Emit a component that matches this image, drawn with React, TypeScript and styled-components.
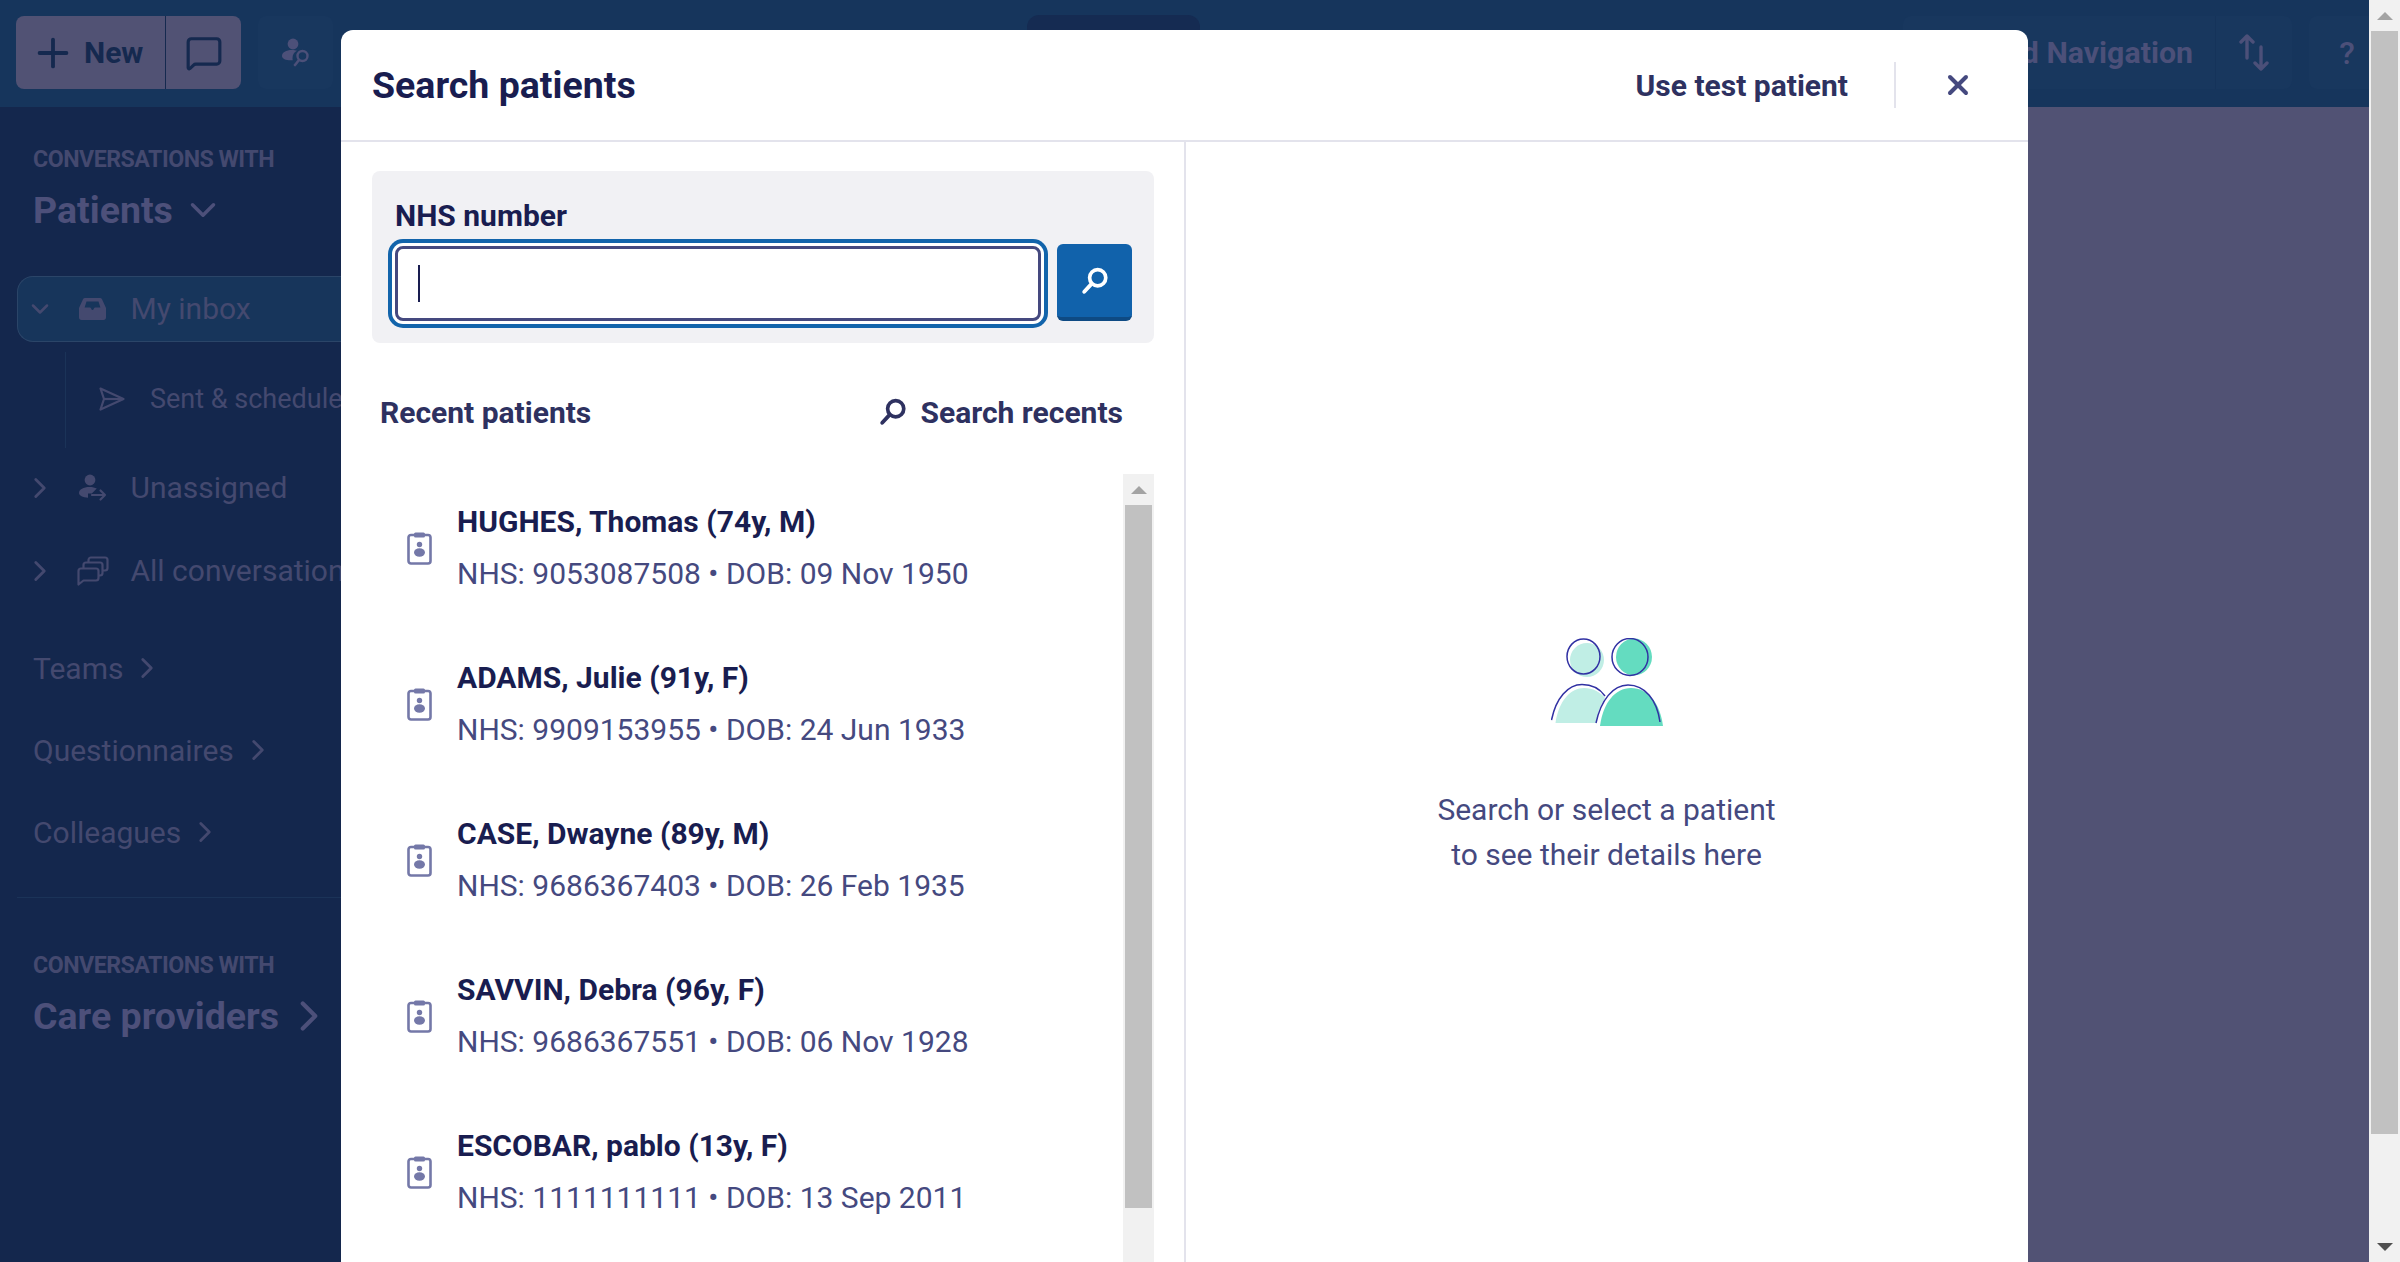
import React from "react";
import styled, { createGlobalStyle } from "styled-components";
import { ChevronDown, ChevronRight, MessageSquare, Plus, X } from "lucide-react";

const GlobalStyle = createGlobalStyle`
  html, body, #root {
    margin: 0;
    height: 100%;
  }
  body {
    overflow: hidden;
    font-family: Roboto, "Liberation Sans", sans-serif;
    background: #515274;
  }
  * {
    box-sizing: border-box;
  }
`;

const Viewport = styled.div`
  display: flex;
  height: 1262px;
  overflow: hidden;
`;

const Shell = styled.div`
  position: relative;
  flex: 1;
  display: flex;
  flex-direction: column;
  min-width: 0;
`;

const TopBar = styled.header`
  display: flex;
  flex-shrink: 0;
  height: 107px;
  padding: 16px 0 18px 16px;
  background: #16355c;
  overflow: hidden;
`;

const SplitButton = styled.div`
  display: flex;
  align-items: center;
  width: 225px;
  border-radius: 8px;
  background: #515274;
  color: #15294f;
`;

const NewPart = styled.div`
  display: flex;
  align-items: center;
  gap: 8px;
  width: 150px;
  height: 100%;
  padding-left: 14px;
  border-right: 1px solid #15294f;
  font-size: 30px;
  font-weight: 700;
`;

const CommentPart = styled.div`
  flex: 1;
  display: flex;
  justify-content: center;
`;

const GhostButton = styled.div<{ $width: number }>`
  display: flex;
  flex-shrink: 0;
  align-items: center;
  justify-content: center;
  width: ${(p) => p.$width}px;
  border-radius: 8px;
  background: #18375e;
  color: #4c5079;
`;

const FindButton = styled(GhostButton)`
  margin-left: 17px;
`;

const CentreTab = styled.div`
  flex-shrink: 0;
  width: 173px;
  margin-left: 694px;
  margin-top: -1px;
  border-radius: 12px 12px 0 0;
  background: #152b52;
`;

const RightTools = styled.div`
  display: flex;
  flex-shrink: 0;
  gap: 17px;
  margin-left: auto;
  margin-right: -16px;
`;

const NavButton = styled.div`
  display: flex;
  align-items: stretch;
  border-radius: 8px;
  background: #18375e;
  color: #4c5079;
  font-size: 30.3px;
  font-weight: 700;
`;

const NavLabel = styled.div`
  display: flex;
  align-items: center;
  padding: 0 22px 0 40px;
  border-right: 1px solid #15335a;
  white-space: nowrap;
`;

const NavArrows = styled.div`
  display: flex;
  align-items: center;
  justify-content: center;
  width: 76px;
`;

const HelpMark = styled.span`
  font-size: 32px;
  font-weight: 500;
`;

const Content = styled.div`
  flex: 1;
  display: flex;
  min-height: 0;
`;

const Sidebar = styled.aside`
  display: flex;
  flex-direction: column;
  flex-shrink: 0;
  width: 341px;
  background: #14274d;
  color: #44496f;
  overflow: hidden;
`;

const SectionHead = styled.div`
  padding: 0 0 0 33px;
`;

const Eyebrow = styled.div`
  height: 25px;
  font-size: 23.2px;
  font-weight: 700;
  line-height: 25px;
  letter-spacing: -0.5px;
  text-transform: uppercase;
  white-space: nowrap;
`;

const SectionTitle = styled.div`
  display: flex;
  align-items: center;
  gap: 9px;
  height: 46px;
  margin-top: 15px;
  font-size: 37.5px;
  font-weight: 700;
  color: #4d507a;
  white-space: nowrap;
`;

const CareTitle = styled(SectionTitle)`
  gap: 5px;
`;

const PatientsHead = styled(SectionHead)`
  padding-top: 40px;
`;

const CareHead = styled(SectionHead)`
  padding-top: 55px;
`;

const NavList = styled.div`
  display: flex;
  flex-direction: column;
  margin-top: 43px;
`;

const InboxRow = styled.div`
  display: flex;
  align-items: center;
  height: 66px;
  margin-left: 17px;
  padding-left: 5px;
  border: 1px solid #2b4568;
  border-right: none;
  border-radius: 16px 0 0 16px;
  background: #17355b;
  white-space: nowrap;
`;

const ChildList = styled.div`
  height: 96px;
  margin: 10px 0 10px 65px;
  padding: 23px 0 0 33px;
  border-left: 1px solid #1b3358;
`;

const ChildRow = styled.div`
  display: flex;
  align-items: center;
  gap: 25px;
  height: 48px;
  font-size: 27px;
  white-space: nowrap;

  svg {
    flex-shrink: 0;
  }
`;

const TreeRow = styled.div`
  display: flex;
  align-items: center;
  height: 60px;
  padding-left: 23px;
  white-space: nowrap;

  & + & {
    margin-top: 23px;
  }
`;

const ChevronSlot = styled.span`
  display: flex;
  flex-shrink: 0;
  align-items: center;
  justify-content: center;
  width: 34px;
`;

const IconSlot = styled.span`
  display: flex;
  flex-shrink: 0;
  align-items: center;
  justify-content: center;
  width: 48px;
  margin-left: 11.5px;
  margin-right: 14px;
`;

const RowLabel = styled.span`
  font-size: 30px;
  line-height: 36px;
`;

const PlainLinks = styled.div`
  display: flex;
  flex-direction: column;
  gap: 22px;
  margin-top: 37px;
  padding-left: 33px;
`;

const PlainLink = styled.div`
  display: flex;
  align-items: center;
  gap: 7px;
  height: 60px;
  font-size: 30px;
`;

const SideRule = styled.div`
  height: 1px;
  margin: 35px 0 0 17px;
  background: #1b3358;
`;

const Stage = styled.main`
  flex: 1;
  background: #515274;
`;

const Modal = styled.section`
  position: absolute;
  top: 30px;
  bottom: 0;
  left: 341px;
  width: 1687px;
  display: flex;
  flex-direction: column;
  border-radius: 12px 12px 0 0;
  background: #fff;
  overflow: hidden;
`;

const ModalHeader = styled.div`
  display: flex;
  flex-shrink: 0;
  align-items: center;
  height: 112px;
  padding: 0 54px 0 31px;
  border-bottom: 2px solid #e3e3ec;
`;

const ModalTitle = styled.h2`
  flex: 1;
  margin: 0;
  font-size: 37.5px;
  font-weight: 700;
  color: #191d50;
`;

const TestPatient = styled.button`
  padding: 0;
  border: none;
  background: none;
  font-family: inherit;
  font-size: 30px;
  font-weight: 700;
  color: #2e3160;
`;

const HeaderRule = styled.span`
  width: 2px;
  height: 46px;
  margin: 0 46px 0 46px;
  background: #e3e3ec;
`;

const CloseButton = styled.span`
  display: flex;
  color: #45497f;
`;

const ModalBody = styled.div`
  flex: 1;
  display: flex;
  min-height: 0;
`;

const LeftPane = styled.div`
  display: flex;
  flex-direction: column;
  flex-shrink: 0;
  width: 845px;
  padding: 29px 30px 0 31px;
  border-right: 2px solid #e3e3ec;
`;

const SearchPanel = styled.div`
  height: 172px;
  padding: 26px 22px 0 23px;
  border-radius: 8px;
  background: #f1f1f4;
`;

const FieldLabel = styled.label`
  display: block;
  height: 38px;
  font-size: 30px;
  font-weight: 700;
  line-height: 38px;
  color: #191d50;
`;

const FieldRow = styled.div`
  display: flex;
  align-items: flex-start;
  gap: 16px;
  margin-top: 9px;
`;

const FieldFrame = styled.div`
  flex: 1;
  height: 75px;
  margin-top: 2px;
  display: flex;
  align-items: center;
  padding-left: 20px;
  border: 3px solid #45497f;
  border-radius: 8px;
  background: #fff;
  box-shadow: 0 0 0 3px #fff, 0 0 0 7px #1264ab;
`;

const Caret = styled.span`
  width: 2px;
  height: 37px;
  background: #191d50;
`;

const SearchButton = styled.button`
  display: flex;
  flex-shrink: 0;
  align-items: center;
  justify-content: center;
  width: 75px;
  height: 77px;
  padding: 0;
  border: none;
  border-bottom: 4px solid #0e4a83;
  border-radius: 6px;
  background: #1162ab;
`;

const RecentHead = styled.div`
  display: flex;
  align-items: center;
  justify-content: space-between;
  height: 50px;
  margin-top: 44px;
  padding: 0 31px 0 8px;
  font-size: 30px;
  font-weight: 700;
  color: #2e3160;
`;

const RecentSearch = styled.span`
  display: flex;
  align-items: center;
  gap: 14px;
`;

const ListFrame = styled.div`
  flex: 1;
  display: flex;
  justify-content: space-between;
  min-height: 0;
  margin-top: 37px;
`;

const PatientList = styled.ul`
  flex: 1;
  margin: 0;
  padding: 0;
  list-style: none;
  overflow: hidden;
`;

const PatientRow = styled.li`
  display: flex;
  align-items: center;
  height: 156px;
  padding: 0 0 8px 35px;
  gap: 25px;

  svg {
    flex-shrink: 0;
  }
`;

const PatientName = styled.div`
  font-size: 30px;
  font-weight: 700;
  line-height: 40px;
  color: #191d50;
`;

const PatientMeta = styled.div`
  margin-top: 12.5px;
  font-size: 30px;
  line-height: 40px;
  color: #45497f;
`;

const Track = styled.div<{ $gutter: number }>`
  display: flex;
  flex-direction: column;
  flex-shrink: 0;
  width: 31px;
  padding: 0 ${(p) => p.$gutter}px;
  background: #f1f1f1;
`;

const ArrowCap = styled.div`
  display: flex;
  flex-shrink: 0;
  align-items: center;
  justify-content: center;
  height: 31px;
`;

const Thumb = styled.div<{ $height: number }>`
  flex-shrink: 0;
  height: ${(p) => p.$height}px;
  background: #c1c1c1;
`;

const PageTrack = styled(Track)`
  justify-content: space-between;
`;

const RightPane = styled.div`
  flex: 1;
  display: flex;
  flex-direction: column;
  align-items: center;
  padding: 496px 1px 0 0;
`;

const EmptyText = styled.p`
  margin: 61px 0 0;
  font-size: 30px;
  line-height: 45px;
  text-align: center;
  color: #45497f;
`;

const UpArrow = ({ color }: { color: string }) => (
  <svg width="16" height="8" viewBox="0 0 16 8">
    <path d="M8 0L16 8H0Z" fill={color} />
  </svg>
);

const DownArrow = ({ color }: { color: string }) => (
  <svg width="16" height="8" viewBox="0 0 16 8">
    <path d="M0 0H16L8 8Z" fill={color} />
  </svg>
);

const Magnifier = ({ size, color }: { size: number; color: string }) => (
  <svg width={size} height={size} viewBox="0 0 26 26" fill="none">
    <circle cx="15.5" cy="10" r="7.5" stroke={color} strokeWidth="3.4" />
    <path d="M10 15.5L3 23" stroke={color} strokeWidth="3.6" strokeLinecap="round" />
  </svg>
);

const PersonSearchIcon = () => (
  <svg width="28" height="30" viewBox="0 0 28 30">
    <circle cx="11" cy="6" r="5.4" fill="currentColor" />
    <path d="M0 18c0-3.500 4-6 10-6 2 0 3.500.3 5 .8-3 1.500-4.500 4-4.500 7.200 0 .8.100 1.500.3 2.200C5 22.800 0 21 0 18Z" fill="currentColor" />
    <circle cx="20.500" cy="18" r="5" fill="none" stroke="currentColor" strokeWidth="2.400" />
    <path d="M17 22l-4 5" stroke="currentColor" strokeWidth="2.600" strokeLinecap="round" />
  </svg>
);

const InboxIcon = () => (
  <svg width="27" height="22" viewBox="0 0 27 22">
    <path
      d="M6 0h15c.9 0 1.600.4 2 1.200L27 10v9.500c0 1.400-1.100 2.500-2.500 2.500h-22C1.100 22 0 20.900 0 19.500V10l4-8.800C4.400.4 5.100 0 6 0Zm-.4 9.500h5.200c.6 0 1 .3 1.200.8l.3.800c.2.600.7.900 1.200.9s1-.3 1.200-.9l.3-.8c.2-.5.600-.8 1.200-.8h5.200L19.500 3.500h-12Z"
      fill="currentColor"
      fillRule="evenodd"
    />
  </svg>
);

const SendIcon = () => (
  <svg width="26" height="24" viewBox="0 0 26 24" fill="none">
    <path d="M1.500 1.500L24.500 12L1.500 22.500L5 12Z" stroke="currentColor" strokeWidth="2.200" strokeLinejoin="round" />
    <path d="M5 12H24" stroke="currentColor" strokeWidth="2.200" />
  </svg>
);

const UnassignedIcon = () => (
  <svg width="28" height="28" viewBox="0 0 28 28">
    <circle cx="11" cy="6" r="5.400" fill="currentColor" />
    <path d="M0 19c0-3.600 4.500-6 10.500-6 3 0 5.500.6 7.300 1.600l-5 4.900H9v4.200C3.800 23.300 0 21.700 0 19Z" fill="currentColor" />
    <path d="M13 21h13M21.500 16.500L26 21l-4.500 4.500" fill="none" stroke="currentColor" strokeWidth="2.200" strokeLinecap="round" strokeLinejoin="round" />
  </svg>
);

const StackIcon = () => (
  <svg width="32" height="30" viewBox="0 0 32 30" fill="none" stroke="currentColor" strokeWidth="2.200" strokeLinejoin="round">
    <path d="M1.500 15c0-1.400 1.100-2.500 2.500-2.500h15c1.400 0 2.500 1.100 2.500 2.500v7c0 1.400-1.100 2.500-2.500 2.500H6.500L1.500 28.500Z" />
    <path d="M6.500 12V9c0-1.400 1.100-2.500 2.500-2.500h14c1.400 0 2.500 1.100 2.500 2.500v8c0 1.400-1.100 2.500-2.500 2.500h-1.500" />
    <path d="M11.500 6V4c0-1.400 1.100-2.500 2.500-2.500h14c1.400 0 2.500 1.100 2.500 2.500v8c0 1.400-1.100 2.500-2.500 2.500h-2.500" />
  </svg>
);

const SortArrows = () => (
  <svg width="30" height="37" viewBox="0 0 30 37" fill="none" stroke="currentColor" strokeWidth="3.400" strokeLinecap="round" strokeLinejoin="round">
    <path d="M8 24V2M2 8l6-6 6 6" />
    <path d="M22 13v22M16 29l6 6 6-6" />
  </svg>
);

const PatientIcon = () => (
  <svg width="25" height="33" viewBox="0 0 25 33">
    <rect x="1.500" y="3" width="22" height="28.500" rx="2.500" fill="none" stroke="#7478a8" strokeWidth="2.600" />
    <rect x="7" y="0.500" width="11" height="5" rx="1.500" fill="#7478a8" />
    <circle cx="12.500" cy="12.500" r="2.700" fill="#7478a8" />
    <ellipse cx="12.500" cy="20.500" rx="5.500" ry="4.200" fill="#7478a8" />
  </svg>
);

const PeopleIllustration = () => (
  <svg width="112" height="88" viewBox="0 0 112 88" fill="none">
    <ellipse cx="36" cy="22" rx="17" ry="17" fill="#c0eee5" />
    <ellipse cx="32.500" cy="18.500" rx="16.500" ry="17.500" fill="none" stroke="#3131a3" strokeWidth="1.500" />
    <ellipse cx="83" cy="19" rx="18" ry="18.500" fill="#64dcc0" />
    <ellipse cx="79" cy="19" rx="18" ry="18.500" fill="none" stroke="#3131a3" strokeWidth="1.500" />
    <path d="M4.500 85C8 62 20 50 33 50C42 50 49 54 54 60C49 68 46 76 45 85Z" fill="#c0eee5" />
    <path d="M0.500 82C5 60 17 46.500 31 46.500C41 46.500 49 51 54 58" stroke="#3131a3" strokeWidth="1.500" />
    <path d="M49 88C52 65 64 50 80 50C97 50 109 65 112 88Z" fill="#64dcc0" />
    <path d="M45 85C50 62 62 47 77 47C94 47 106 62 109 84" stroke="#3131a3" strokeWidth="1.500" />
  </svg>
);

const patients = [
  { name: "HUGHES, Thomas (74y, M)", meta: "NHS: 9053087508 • DOB: 09 Nov 1950" },
  { name: "ADAMS, Julie (91y, F)", meta: "NHS: 9909153955 • DOB: 24 Jun 1933" },
  { name: "CASE, Dwayne (89y, M)", meta: "NHS: 9686367403 • DOB: 26 Feb 1935" },
  { name: "SAVVIN, Debra (96y, F)", meta: "NHS: 9686367551 • DOB: 06 Nov 1928" },
  { name: "ESCOBAR, pablo (13y, F)", meta: "NHS: 1111111111 • DOB: 13 Sep 2011" },
];

export default function App() {
  return (
    <>
      <GlobalStyle />
      <Viewport>
        <Shell>
          <TopBar>
            <SplitButton>
              <NewPart>
                <Plus size={46} strokeWidth={2} />
                New
              </NewPart>
              <CommentPart>
                <MessageSquare size={38} strokeWidth={2} />
              </CommentPart>
            </SplitButton>
            <FindButton $width={75}>
              <PersonSearchIcon />
            </FindButton>
            <CentreTab />
            <RightTools>
              <NavButton>
                <NavLabel>Guided Navigation</NavLabel>
                <NavArrows>
                  <SortArrows />
                </NavArrows>
              </NavButton>
              <GhostButton $width={76}>
                <HelpMark>?</HelpMark>
              </GhostButton>
            </RightTools>
          </TopBar>
          <Content>
            <Sidebar>
              <PatientsHead>
                <Eyebrow>Conversations with</Eyebrow>
                <SectionTitle>
                  Patients
                  <ChevronDown size={42} strokeWidth={2} />
                </SectionTitle>
              </PatientsHead>
              <NavList>
                <InboxRow>
                  <ChevronSlot>
                    <ChevronDown size={28} strokeWidth={2.2} />
                  </ChevronSlot>
                  <IconSlot>
                    <InboxIcon />
                  </IconSlot>
                  <RowLabel>My inbox</RowLabel>
                </InboxRow>
                <ChildList>
                  <ChildRow>
                    <SendIcon />
                    Sent &amp; scheduled
                  </ChildRow>
                </ChildList>
                <TreeRow>
                  <ChevronSlot>
                    <ChevronRight size={34} strokeWidth={2} />
                  </ChevronSlot>
                  <IconSlot>
                    <UnassignedIcon />
                  </IconSlot>
                  <RowLabel>Unassigned</RowLabel>
                </TreeRow>
                <TreeRow>
                  <ChevronSlot>
                    <ChevronRight size={34} strokeWidth={2} />
                  </ChevronSlot>
                  <IconSlot>
                    <StackIcon />
                  </IconSlot>
                  <RowLabel>All conversations</RowLabel>
                </TreeRow>
              </NavList>
              <PlainLinks>
                <PlainLink>
                  Teams
                  <ChevronRight size={34} strokeWidth={2} />
                </PlainLink>
                <PlainLink>
                  Questionnaires
                  <ChevronRight size={34} strokeWidth={2} />
                </PlainLink>
                <PlainLink>
                  Colleagues
                  <ChevronRight size={34} strokeWidth={2} />
                </PlainLink>
              </PlainLinks>
              <SideRule />
              <CareHead>
                <Eyebrow>Conversations with</Eyebrow>
                <CareTitle>
                  Care providers
                  <ChevronRight size={50} strokeWidth={2} />
                </CareTitle>
              </CareHead>
            </Sidebar>
            <Stage />
          </Content>

          <Modal>
            <ModalHeader>
              <ModalTitle>Search patients</ModalTitle>
              <TestPatient>Use test patient</TestPatient>
              <HeaderRule />
              <CloseButton>
                <X size={32} strokeWidth={3} />
              </CloseButton>
            </ModalHeader>
            <ModalBody>
              <LeftPane>
                <SearchPanel>
                  <FieldLabel>NHS number</FieldLabel>
                  <FieldRow>
                    <FieldFrame>
                      <Caret />
                    </FieldFrame>
                    <SearchButton>
                      <Magnifier size={28} color="#fff" />
                    </SearchButton>
                  </FieldRow>
                </SearchPanel>
                <RecentHead>
                  <span>Recent patients</span>
                  <RecentSearch>
                    <Magnifier size={28} color="#2e3160" />
                    Search recents
                  </RecentSearch>
                </RecentHead>
                <ListFrame>
                  <PatientList>
                    {patients.map((p) => (
                      <PatientRow key={p.name}>
                        <PatientIcon />
                        <div>
                          <PatientName>{p.name}</PatientName>
                          <PatientMeta>{p.meta}</PatientMeta>
                        </div>
                      </PatientRow>
                    ))}
                  </PatientList>
                  <Track $gutter={2}>
                    <ArrowCap>
                      <UpArrow color="#a3a3a3" />
                    </ArrowCap>
                    <Thumb $height={703} />
                  </Track>
                </ListFrame>
              </LeftPane>
              <RightPane>
                <PeopleIllustration />
                <EmptyText>
                  Search or select a patient
                  <br />
                  to see their details here
                </EmptyText>
              </RightPane>
            </ModalBody>
          </Modal>
        </Shell>
        <PageTrack $gutter={2}>
          <div>
            <ArrowCap>
              <UpArrow color="#a3a3a3" />
            </ArrowCap>
            <Thumb $height={1103} />
          </div>
          <ArrowCap>
            <DownArrow color="#505050" />
          </ArrowCap>
        </PageTrack>
      </Viewport>
    </>
  );
}
